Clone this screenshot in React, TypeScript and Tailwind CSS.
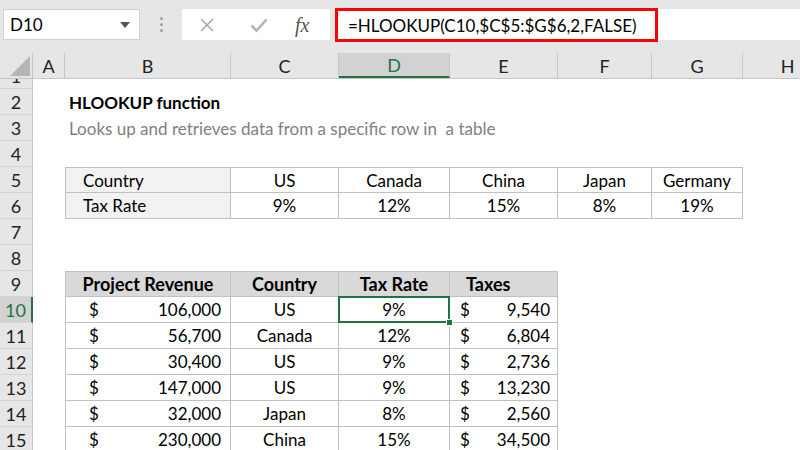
import type { ReactNode } from 'react';

// column widths (A..H) in px
const COLS = ['A', 'B', 'C', 'D', 'E', 'F', 'G', 'H'];
const WIDTHS = [32, 166, 108, 111, 108, 94, 91, 90];

type Cell = {
  text?: ReactNode;
  align?: 'left' | 'center' | 'right';
  pad?: string;
  bold?: boolean;
  fill?: string;
  border?: string;
  selected?: boolean;
};

const GRID = 'border-r border-b border-[#c0c0c0]';

function acct(amount: string, dollarPad: string, rightPad: string) {
  return (
    <div className={`flex w-full items-center justify-between ${dollarPad} ${rightPad}`}>
      <span>$</span>
      <span>{amount}</span>
    </div>
  );
}

const lookup = [
  ['Country', 'US', 'Canada', 'China', 'Japan', 'Germany'],
  ['Tax Rate', '9%', '12%', '15%', '8%', '19%'],
];

const revenue = [
  ['106,000', 'US', '9%', '9,540'],
  ['56,700', 'Canada', '12%', '6,804'],
  ['30,400', 'US', '9%', '2,736'],
  ['147,000', 'US', '9%', '13,230'],
  ['32,000', 'Japan', '8%', '2,560'],
  ['230,000', 'China', '15%', '34,500'],
];

function buildRow(r: number): Cell[] {
  const row: Cell[] = COLS.map(() => ({}));
  if (r === 5 || r === 6) {
    const data = lookup[r - 5];
    data.forEach((t, i) => {
      const c = i + 1;
      row[c] = {
        text: t,
        align: i === 0 ? 'left' : 'center',
        pad: i === 0 ? 'pl-[17px]' : '',
        fill: i === 0 ? 'bg-[#f2f2f2]' : '',
        border: `${GRID} ${r === 5 ? 'border-t' : ''} ${i === 0 ? 'border-l' : ''}`,
      };
    });
  }
  if (r === 9) {
    const heads = ['Project Revenue', 'Country', 'Tax Rate', 'Taxes'];
    heads.forEach((t, i) => {
      row[i + 1] = {
        text: t,
        bold: true,
        align: i === 3 ? 'left' : 'center',
        pad: i === 3 ? 'pl-[16px]' : '',
        fill: 'bg-[#d9d9d9]',
        border: `${GRID} border-t ${i === 0 ? 'border-l' : ''}`,
      };
    });
  }
  if (r >= 10 && r <= 15) {
    const d = revenue[r - 10];
    row[1] = { text: acct(d[0], 'pl-[23px]', 'pr-[9px]'), border: `${GRID} border-l` };
    row[2] = { text: d[1], align: 'center', border: GRID };
    row[3] = { text: d[2], align: 'center', border: GRID, selected: r === 10 };
    row[4] = { text: acct(d[3], 'pl-[10px]', 'pr-[7px]'), border: GRID };
  }
  return row;
}

function CellBox({ cell, width }: { cell: Cell; width: number }) {
  const justify =
    cell.align === 'center' ? 'justify-center' : cell.align === 'right' ? 'justify-end' : 'justify-start';
  return (
    <div
      className={`relative flex h-full shrink-0 items-center whitespace-nowrap ${justify} ${cell.pad ?? ''} ${
        cell.fill ?? ''
      } ${cell.border ?? ''} ${cell.bold ? 'text-[18px] font-bold' : ''} ${cell.selected ? 'z-10' : ''}`}
      style={{ width }}
    >
      {cell.text}
      {cell.selected && (
        <>
          <div className="absolute -left-px -top-px -right-px -bottom-px border-2 border-[#217346]" />
          <div className="absolute -bottom-[4px] -right-[4px] h-[7px] w-[7px] border border-white bg-[#217346]" />
        </>
      )}
    </div>
  );
}

function RowHeader({ n, active }: { n: number; active?: boolean }) {
  return (
    <div
      className={`flex h-full w-[33px] shrink-0 items-center justify-center border-b border-[#d4d4d4] text-[18px] ${
        active ? 'border-r-2 border-r-[#217346] bg-[#d2d2d2] text-[#217346]' : 'border-r border-r-[#c6c6c6] bg-[#e6e6e6] text-[#222]'
      }`}
    >
      {n}
    </div>
  );
}

function Toolbar() {
  return (
    <div className="flex h-[53px] items-start bg-[#e6e6e6] pt-[9px]">
      {/* name box */}
      <div className="ml-[3px] flex h-[31px] w-[137px] items-center justify-between border border-[#d0d0d0] bg-white pl-[6px] pr-[9px]">
        <span>D10</span>
        <svg width="10" height="6" viewBox="0 0 10 6">
          <path d="M0 0 L10 0 L5 6 Z" fill="#555" />
        </svg>
      </div>
      {/* grip dots */}
      <div className="flex h-[31px] w-[42px] flex-col items-center justify-center gap-[3px]">
        <span className="h-[3px] w-[3px] rounded-full bg-[#a0a0a0]" />
        <span className="h-[3px] w-[3px] rounded-full bg-[#a0a0a0]" />
        <span className="h-[3px] w-[3px] rounded-full bg-[#a0a0a0]" />
      </div>
      {/* cancel / enter / fx */}
      <div className="flex h-[31px] w-[148px] items-center bg-white">
        <svg className="ml-[17px]" width="16" height="16" viewBox="0 0 16 16">
          <path d="M2 2 L14 14 M14 2 L2 14" stroke="#a8a8a8" strokeWidth="1.6" />
        </svg>
        <svg className="ml-[35px]" width="18" height="16" viewBox="0 0 18 16">
          <path d="M1.5 8.5 L6.5 13.5 L16.5 2.5" stroke="#b4b4b4" strokeWidth="2.6" fill="none" />
        </svg>
        <span className="ml-[27px] text-[20px] italic text-[#555] [font-family:'Liberation_Serif',serif]">fx</span>
      </div>
      {/* formula */}
      <div className="ml-[5px] -mt-[1px] flex h-[34px] w-[323px] items-center border-[3px] border-[#ff0000] bg-white pl-[10px]">
        =HLOOKUP(C10,$C$5:$G$6,2,FALSE)
      </div>
      <div className="h-[31px] flex-1 bg-white" />
    </div>
  );
}

function ColumnHeaders() {
  return (
    <div className="flex h-[26px] border-b border-[#c6c6c6] bg-[#e6e6e6] text-[18px]">
      <div className="relative flex h-full w-[33px] shrink-0 items-end justify-end border-r border-[#c6c6c6] pb-[2px] pr-[2px]">
        <svg width="20" height="20" viewBox="0 0 20 20">
          <path d="M20 0 L20 20 L0 20 Z" fill="#b5b5b5" />
        </svg>
      </div>
      {COLS.map((c, i) => (
        <div
          key={c}
          className={`flex h-full shrink-0 items-center justify-center ${
            c === 'D'
              ? 'border-b-2 border-r border-b-[#217346] border-r-[#c6c6c6] bg-[#d2d2d2] text-[#217346]'
              : 'border-r border-[#c6c6c6] text-[#222]'
          }`}
          style={{ width: WIDTHS[i] }}
        >
          {c}
        </div>
      ))}
    </div>
  );
}

export default function App() {
  const rows = Array.from({ length: 14 }, (_, i) => i + 2);
  return (
    <div className="h-[450px] w-[800px] overflow-hidden bg-white text-[17px] leading-none text-black [font-family:Lato,'Noto_Sans',sans-serif]">
      <Toolbar />
      <ColumnHeaders />
      {/* row 1, scrolled partly out of view */}
      <div className="flex h-[10px] items-end overflow-hidden">
        <div className="flex h-[26px] w-[33px] shrink-0 items-center justify-center border-b border-r border-[#c6c6c6] border-b-[#d4d4d4] bg-[#e6e6e6] text-[18px] text-[#222]">
          1
        </div>
      </div>
      {rows.map((r) => {
        const cells = buildRow(r);
        return (
          <div key={r} className="flex h-[26px]">
            <RowHeader n={r} active={r === 10} />
            {r === 2 || r === 3 ? (
              <>
                <div className="h-full shrink-0" style={{ width: WIDTHS[0] }} />
                <div
                  className={`flex h-full items-center whitespace-nowrap pl-[4px] ${
                    r === 2 ? 'font-bold text-black' : 'text-[#7f7f7f]'
                  }`}
                >
                  {r === 2 ? 'HLOOKUP function' : 'Looks up and retrieves data from a specific row in\u00a0 a table'}
                </div>
              </>
            ) : (
              cells.map((cell, i) => <CellBox key={i} cell={cell} width={WIDTHS[i]} />)
            )}
          </div>
        );
      })}
    </div>
  );
}
